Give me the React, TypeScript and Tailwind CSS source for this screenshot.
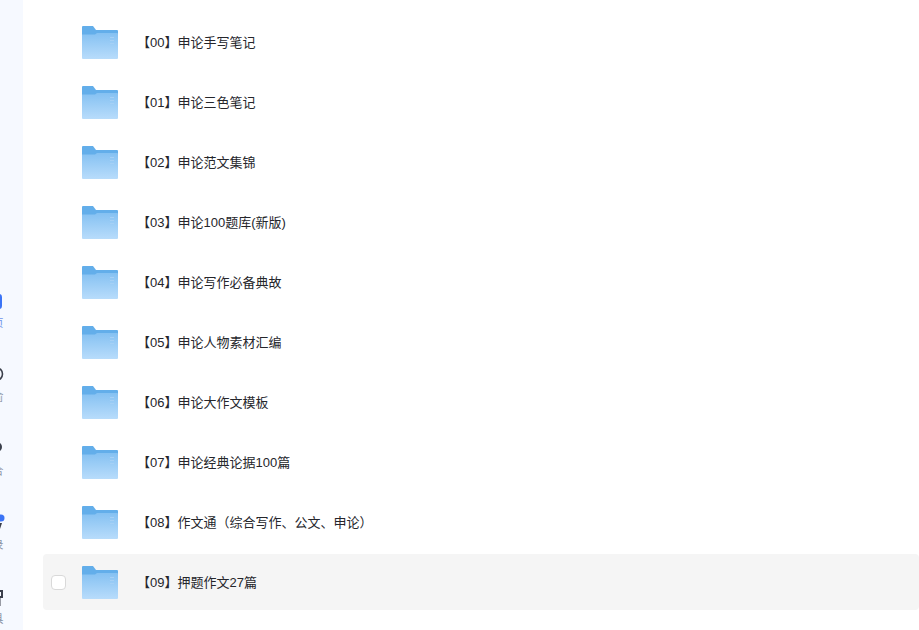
import type { ReactNode } from "react";

const items = [
  "【00】申论手写笔记",
  "【01】申论三色笔记",
  "【02】申论范文集锦",
  "【03】申论100题库(新版)",
  "【04】申论写作必备典故",
  "【05】申论人物素材汇编",
  "【06】申论大作文模板",
  "【07】申论经典论据100篇",
  "【08】作文通（综合写作、公文、申论）",
  "【09】押题作文27篇",
];

function FolderIcon({ id }: { id: number }) {
  return (
    <svg width="36" height="33" viewBox="0 0 36 33" className="shrink-0">
      <defs>
        <linearGradient id={`folder-${id}`} x1="0" y1="0" x2="0" y2="1">
          <stop offset="0" stopColor="#85c1f2" />
          <stop offset="1" stopColor="#b8dcfb" />
        </linearGradient>
      </defs>
      <path d="M0 1a1 1 0 0 1 1-1h10l3 4h21a1 1 0 0 1 1 1v8H0z" fill="#63aeea" />
      <path d="M0 8.5h13l2-1.5h20a1 1 0 0 1 1 1v24a1 1 0 0 1-1 1H1a1 1 0 0 1-1-1z" fill={`url(#folder-${id})`} />
      <path d="M28 11.5h4M28 14.5h4M28 17.5h4" stroke="#a5d0f5" strokeWidth="1" />
    </svg>
  );
}

function NavItem({ icon, label, active }: { icon: ReactNode; label: string; active?: boolean }) {
  return (
    <div className="h-[74px] flex flex-col items-center gap-[6px]">
      <div className="h-5 w-full">{icon}</div>
      <span className={`text-[11px] leading-3 ${active ? "text-[#6f94ea]" : "text-[#8a94a6]"}`}>{label}</span>
    </div>
  );
}

// the nav column is scrolled mostly off the left edge, only its right end shows
function Sidebar() {
  return (
    <div className="w-[23px] h-[630px] shrink-0 bg-[#f6f9ff] overflow-hidden pt-[291px]">
      <div className="w-14 -ml-[30px]">
        <NavItem
          active
          label="页"
          icon={
            <svg width="56" height="20" viewBox="0 0 56 20">
              <rect x="14" y="3" width="18" height="15" rx="3" fill="#3b74f6" />
            </svg>
          }
        />
        <NavItem
          label="俞"
          icon={
            <svg width="56" height="20" viewBox="0 0 56 20">
              <circle cx="26" cy="9" r="6.5" fill="none" stroke="#3a3f4b" strokeWidth="1.6" />
            </svg>
          }
        />
        <NavItem
          label="合"
          icon={
            <svg width="56" height="20" viewBox="0 0 56 20">
              <circle cx="27" cy="8" r="5" fill="#3a3f4b" />
            </svg>
          }
        />
        <NavItem
          label="录"
          icon={
            <svg width="56" height="20" viewBox="0 0 56 20">
              <circle cx="31" cy="5" r="3.5" fill="#3b74f6" />
              <path d="M22 10h10l-2 6h-8z" fill="#3a3f4b" />
            </svg>
          }
        />
        <NavItem
          label="具"
          icon={
            <svg width="56" height="20" viewBox="0 0 56 20">
              <path d="M20 4h12v6h-2.5v9" fill="none" stroke="#3a3f4b" strokeWidth="2" />
            </svg>
          }
        />
      </div>
    </div>
  );
}

export default function App() {
  return (
    <div className="w-[919px] h-[630px] flex overflow-hidden bg-white font-['Liberation_Sans','Noto_Sans_CJK_SC',sans-serif]">
      <Sidebar />
      <div className="flex-1 pl-5 pt-[14px] flex flex-col gap-1">
        {items.map((name, i) => (
          <div key={name} className={`h-14 shrink-0 flex items-center pl-2 rounded ${i === 9 ? "bg-[#f5f5f5]" : ""}`}>
            <span className={`w-[15px] h-[15px] mr-4 rounded-sm border border-[#d9d9d9] bg-white ${i === 9 ? "" : "invisible"}`} />
            <FolderIcon id={i} />
            <span className="ml-[22px] pt-[2px] -indent-[3px] text-[13px] text-[#25262b]">{name}</span>
          </div>
        ))}
      </div>
    </div>
  );
}
